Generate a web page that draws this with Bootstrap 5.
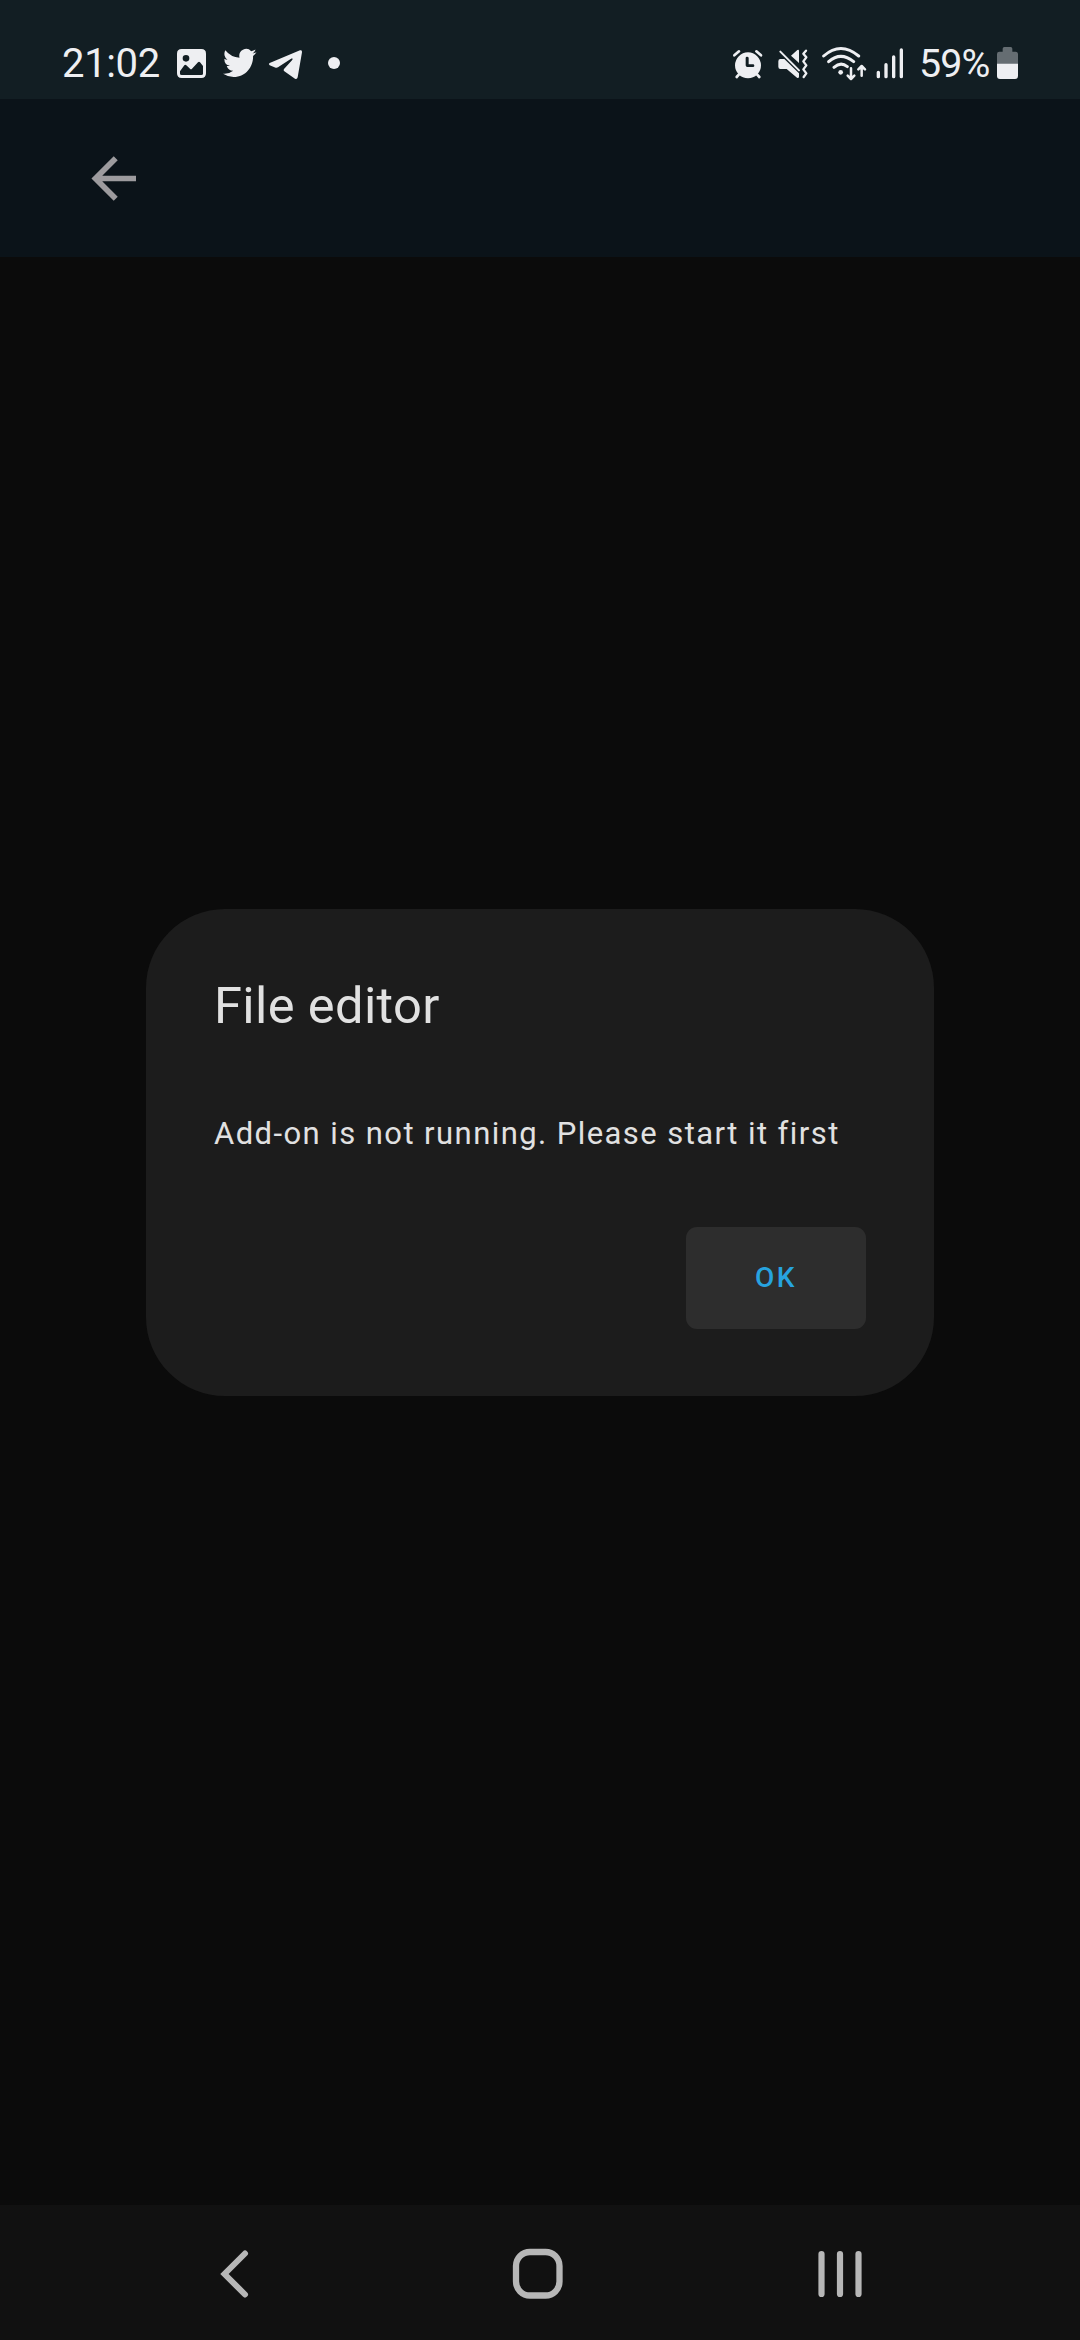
<!DOCTYPE html>
<html lang="en" data-bs-theme="dark">
<head>
<meta charset="utf-8">
<meta name="viewport" content="width=device-width, initial-scale=1">
<title>File editor</title>
<link href="https://cdn.jsdelivr.net/npm/bootstrap@5.3.0/dist/css/bootstrap.min.css" rel="stylesheet">
<style>
  body { background: #0b0b0b; font-family: Roboto, sans-serif; height: 2340px; overflow: hidden; }
  svg { display: block; flex: none; }
  .status-bar { height: 99px; background: #121e23; color: #eeeff2; padding: 46px 61px 18px 62px; }
  .status-bar svg { height: 35px; fill: currentColor; }
  .status-text { font-size: 40px; line-height: 35px; white-space: nowrap; flex: none; }
  .clock-text { width: 114px; letter-spacing: -.35px; }
  .battery-text { width: 77px; font-size: 39.4px; letter-spacing: -.9px; margin-left: 15px; }
  .app-bar { height: 158px; background: #0b1319; padding-left: 90.5px; color: #9d9b9e; }
  .dialog-box { width: 788px; height: 487px; margin-top: 652px; padding: 67px 68px; background: #1c1c1c; border-radius: 79px; color: #e1e1e1; }
  .dialog-heading { font-size: 50.6px; line-height: 60px; font-weight: 400; letter-spacing: .37px; color: inherit; }
  .dialog-message { font-size: 31px; line-height: 43px; letter-spacing: 1.43px; margin-top: 76px; white-space: nowrap; }
  .btn-ok { --bs-btn-color: #27a3df; --bs-btn-bg: #2d2d2d; --bs-btn-border-width: 0; width: 180px; height: 102px; border-radius: 11px; font-size: 28px; font-weight: 500; letter-spacing: 2.5px; line-height: 1; margin-top: 72px; }
  .system-nav { height: 135px; background: #111; padding: 3px 214px 0 217px; color: #b7b7b7; }
</style>
</head>
<body class="d-flex flex-column">
  <header class="status-bar d-flex justify-content-between align-items-start">
    <div class="d-flex">
      <span class="status-text clock-text">21:02</span>
      <svg width="31" viewBox="408 48 93 105"><path fill-rule="evenodd" d="M425 57H484Q498 57 498 71V130Q498 144 484 144H425Q411 144 411 130V71Q411 57 425 57ZM438 75A10 10 0 1 0 438 95A10 10 0 1 0 438 75ZM420 124V131Q420 135 425 135H484Q489 135 489 131V108L480 97Q477 94 474 97L456 116Q453 119 450 116L439 106Q436 103 433 106Z"/></svg>
      <svg class="ms-3" style="width:33.5px" viewBox="0 .6 16 16.3" preserveAspectRatio="none"><path d="M5.026 15c6.038 0 9.341-5.003 9.341-9.334 0-.14 0-.282-.006-.422A6.685 6.685 0 0 0 16 3.542a6.658 6.658 0 0 1-1.889.518 3.301 3.301 0 0 0 1.447-1.817 6.533 6.533 0 0 1-2.087.793A3.286 3.286 0 0 0 7.875 6.03a9.325 9.325 0 0 1-6.767-3.429 3.289 3.289 0 0 0 1.018 4.382A3.323 3.323 0 0 1 .64 6.575v.045a3.288 3.288 0 0 0 2.632 3.218 3.203 3.203 0 0 1-.865.115 3.23 3.23 0 0 1-.614-.057 3.283 3.283 0 0 0 3.067 2.277A6.588 6.588 0 0 1 .78 13.58a6.32 6.32 0 0 1-.78-.045A9.344 9.344 0 0 0 5.026 15z"/></svg>
      <svg width="35" style="margin-left:11.5px" viewBox="684 48 105 105"><path d="M689 99L780 61Q787 59 786 67L773 142Q771 149 765 146L733 124Q729 121 732 117L756 91C760 86 757 84 752 87L714 112Q711 114 707 113L689 106Q684 102 689 99Z"/></svg>
      <svg width="14" style="margin-left:24px" viewBox="861 48 42 105"><circle cx="882" cy="99" r="18"/></svg>
    </div>
    <div class="d-flex">
      <svg width="32" viewBox="65 48 96 105"><path fill-rule="evenodd" d="M113 67A39 39 0 1 0 113 145A39 39 0 1 0 113 67ZM106 84Q106 80 110 80Q115 80 115 84V103H128Q132 103 132 107Q132 111 128 111H111Q106 111 106 106Z"/><path d="M72 76L86 64M138 64L152 76M86 133L79 141M140 133L147 141" fill="none" stroke="currentColor" stroke-width="8" stroke-linecap="round"/></svg>
      <svg width="33" style="margin-left:12px" viewBox="197 48 99 105"><path d="M210 87H222L266 130V140Q265 146 260 143L229 117H210Q204 117 204 110V94Q204 87 210 87ZM242 77L261 60Q266 57 266 63V99Z"/><path d="M210 65L266 121" stroke="currentColor" stroke-width="6" stroke-linecap="round"/><path d="M287 62L279 71L288 82L279 94L288 106L279 118L288 130L280 141" fill="none" stroke="currentColor" stroke-width="7" stroke-linecap="round" stroke-linejoin="round"/></svg>
      <svg width="47" style="margin-left:12px" viewBox="332 48 141 105"><g fill="none" stroke="currentColor" stroke-width="9" stroke-linecap="round" stroke-linejoin="round"><path d="M340 78Q391 33 445 78M355 95Q391 63 430 95M371 112Q391 94 411 110"/><path stroke-width="7.5" d="M422 115V146M412 137L422 147L432 137M454 137V109M444 118L454 108L464 118"/></g><circle cx="391" cy="127" r="7"/></svg>
      <svg width="29" style="margin-left:7px" viewBox="494 48 87 105"><path d="M504 127V140M527 104V140M550 81V140M573 60V140" stroke="currentColor" stroke-width="10" stroke-linecap="round"/></svg>
      <span class="status-text battery-text">59%</span>
      <svg width="23" viewBox="858 48 69 105"><path fill="#656d72" d="M861 102V72Q861 65 868 65H878V56Q878 51 883 51H902Q907 51 907 56V65H917Q924 65 924 72V102Z"/><path d="M861 101H924V138Q924 147 915 147H870Q861 147 861 138Z"/></svg>
    </div>
  </header>
  <nav class="app-bar d-flex align-items-center" aria-label="App bar">
    <svg width="45" height="45" viewBox="4 4 16 16" fill="currentColor"><path d="M20 11V13H8L13.5 18.5L12.08 19.92L4.16 12L12.08 4.08L13.5 5.5L8 11H20Z"/></svg>
  </nav>
  <main class="flex-grow-1">
    <section class="dialog-box mx-auto d-flex flex-column" role="dialog" aria-labelledby="dialog-title">
      <h1 class="dialog-heading mb-0" id="dialog-title">File editor</h1>
      <p class="dialog-message mb-0">Add-on is not running. Please start it first</p>
      <button type="button" class="btn btn-ok align-self-end">OK</button>
    </section>
  </main>
  <footer class="system-nav d-flex justify-content-between align-items-center">
    <svg width="34" height="54" viewBox="0 0 34 54" fill="none" stroke="currentColor" stroke-width="6" stroke-linecap="round"><path d="M28 6.5L7.500 27L28 47.500"/></svg>
    <svg class="ms-2" width="54" height="54" viewBox="0 0 54 54" fill="none" stroke="currentColor" stroke-width="6.300"><rect x="5" y="5" width="43.500" height="43.500" rx="14"/></svg>
    <svg width="50" height="54" viewBox="0 0 50 54" stroke="currentColor" stroke-width="6.200" stroke-linecap="round"><path d="M5.500 7V47M24 7V47M42.500 7V47"/></svg>
  </footer>
<script src="https://cdn.jsdelivr.net/npm/bootstrap@5.3.0/dist/js/bootstrap.bundle.min.js"></script>
</body>
</html>
